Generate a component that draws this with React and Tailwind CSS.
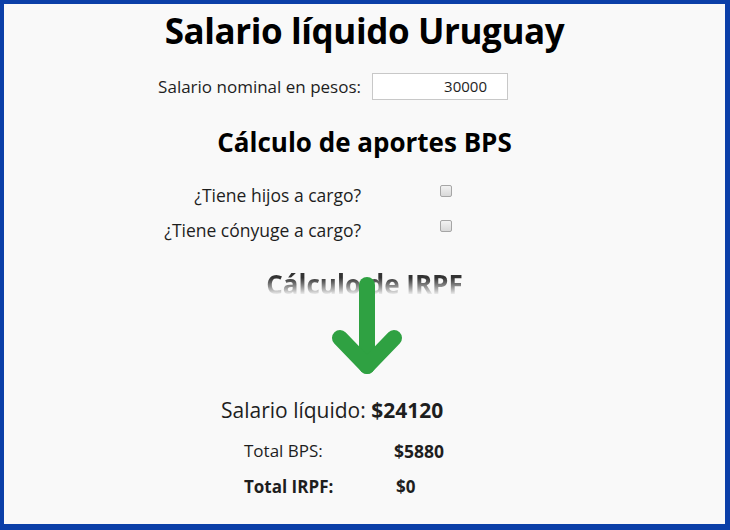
export default function App() {
  return (
    <div className="w-[730px] h-[530px] bg-[#0b3fa8] pl-[4px] pt-[4px] pr-[5px] pb-[6px]" style={{ fontFamily: '"Open Sans", "Noto Sans", sans-serif' }}>
      <div className="h-full w-full bg-[#f9f9f9] text-[#1e1e1e] flex flex-col">
        {/* Title */}
        <h1 className="mt-[5px] h-[44px] leading-[44px] text-center text-[35px] font-bold text-black tracking-[-0.4px]">
          Salario líquido Uruguay
        </h1>

        {/* Nominal salary input */}
        <div className="mt-[20px] flex items-center h-[27px]">
          <label className="w-[357px] text-right text-[17px]">Salario nominal en pesos:</label>
          <div className="ml-[11px] w-[136px] h-[27px] border border-[#c8c8c8] bg-white flex items-center justify-end pr-[20px] text-[15px]">
            30000
          </div>
        </div>

        {/* BPS section */}
        <h2 className="mt-[26px] h-[32px] leading-[32px] text-center text-[26px] font-bold text-black">
          Cálculo de aportes BPS
        </h2>

        <div className="mt-[25px] flex flex-col gap-[11px]">
          <div className="flex items-center h-[24px]">
            <span className="w-[357px] text-right text-[17.5px]">¿Tiene hijos a cargo?</span>
            <span className="ml-[79px] -mt-[9px] w-[12px] h-[12px] rounded-[2px] border border-[#a6a6a6] bg-gradient-to-b from-[#f2f2f2] to-[#d9d9d9]" />
          </div>
          <div className="flex items-center h-[24px]">
            <span className="w-[357px] text-right text-[17.5px]">¿Tiene cónyuge a cargo?</span>
            <span className="ml-[79px] -mt-[9px] w-[12px] h-[12px] rounded-[2px] border border-[#a6a6a6] bg-gradient-to-b from-[#f2f2f2] to-[#d9d9d9]" />
          </div>
        </div>

        {/* IRPF section, heading fading under the arrow */}
        <div className="relative mt-[26px] h-[100px]">
          <h2 className="h-[32px] leading-[32px] text-center text-[26px] font-bold bg-gradient-to-b from-[#333] from-30% to-[#f9f9f9] to-85% bg-clip-text text-transparent">
            Cálculo de IRPF
          </h2>
          <svg className="absolute left-[326px] top-[6px]" width="80" height="104" viewBox="0 0 80 104">
            <g fill="none" stroke="#2fa142" strokeWidth="16" strokeLinecap="round" strokeLinejoin="round">
              <path d="M37 11 V92" />
              <path d="M10 64 L37 92 L64 64" />
            </g>
          </svg>
        </div>

        {/* Results */}
        <div className="mt-[28px] ml-[217px] text-[21px] leading-[28px]">
          Salario líquido: <span className="font-bold">$24120</span>
        </div>
        <div className="mt-[15px] ml-[240px] flex h-[24px] items-center text-[17px]">
          <span className="w-[150px]">Total BPS:</span>
          <span className="font-bold text-[17.5px]">$5880</span>
        </div>
        <div className="mt-[12px] ml-[240px] flex h-[24px] items-center text-[17px] font-bold">
          <span className="w-[152px]">Total IRPF:</span>
          <span>$0</span>
        </div>
      </div>
    </div>
  )
}
